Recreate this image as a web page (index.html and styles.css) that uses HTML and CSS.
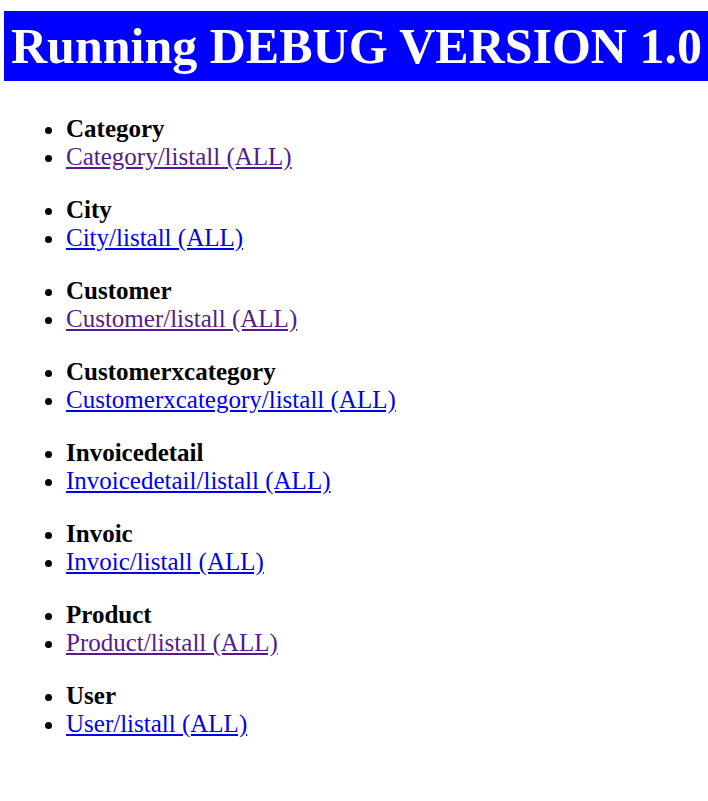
FILE: index.html
```html
<!DOCTYPE html>
<html lang="en">
<head>
  <meta charset="UTF-8">
  <title>Debug</title>
  <link rel="stylesheet" href="styles.css">
</head>
<body>

<h1 class="banner">Running DEBUG VERSION 1.0</h1>

<ul class="entity">
  <li><b>Category</b></li>
  <li><a class="seen" href="#">Category/listall (ALL)</a></li>
</ul>
<ul class="entity">
  <li><b>City</b></li>
  <li><a href="#">City/listall (ALL)</a></li>
</ul>
<ul class="entity">
  <li><b>Customer</b></li>
  <li><a class="seen" href="#">Customer/listall (ALL)</a></li>
</ul>
<ul class="entity">
  <li><b>Customerxcategory</b></li>
  <li><a href="#">Customerxcategory/listall (ALL)</a></li>
</ul>
<ul class="entity">
  <li><b>Invoicedetail</b></li>
  <li><a href="#">Invoicedetail/listall (ALL)</a></li>
</ul>
<ul class="entity">
  <li><b>Invoic</b></li>
  <li><a href="#">Invoic/listall (ALL)</a></li>
</ul>
<ul class="entity">
  <li><b>Product</b></li>
  <li><a class="seen" href="#">Product/listall (ALL)</a></li>
</ul>
<ul class="entity">
  <li><b>User</b></li>
  <li><a href="#">User/listall (ALL)</a></li>
</ul>

</body>
</html>
```

FILE: styles.css
```css
body {
  margin: 0 0 0 4px;
  padding-top: 11px;
  font-family: "Liberation Serif", "Times New Roman", serif;
  background: #fff;
  color: #000;
}

.banner {
  margin: 0;
  height: 70px;
  line-height: 70px;
  padding-left: 7px;
  font-size: 50px;
  font-weight: bold;
  color: #fff;
  background-color: #0000ff;
  white-space: nowrap;
}

.entity {
  margin: 25px 0;
  padding-left: 62px;
  font-size: 25px;
  line-height: 28px;
}

.banner + .entity {
  margin-top: 34px;
}

.entity a {
  color: #0000ee;
}

.entity a.seen {
  color: #551a8b;
}
```
